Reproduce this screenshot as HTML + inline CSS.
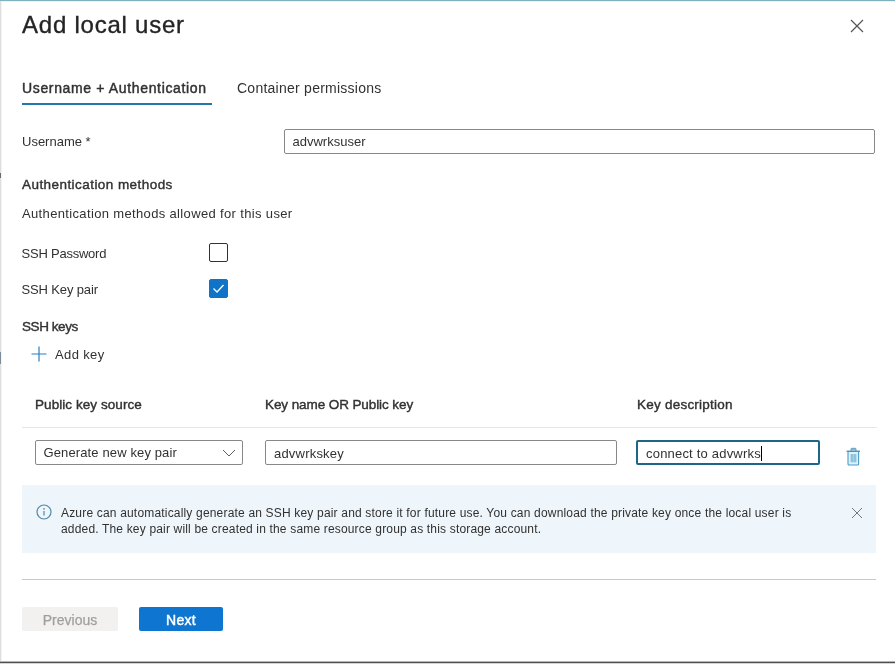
<!DOCTYPE html>
<html><head><meta charset="utf-8"><title>Add local user</title>
<style>
*{box-sizing:border-box;margin:0;padding:0}
html,body{width:895px;height:664px;overflow:hidden;background:#fff}
body{position:relative;font-family:"Liberation Sans",sans-serif;color:#323130;font-size:13px}
.a{position:absolute;white-space:nowrap;line-height:1}
.topline{left:0;top:0;width:895px;height:2px;background:linear-gradient(#7fb1be 0,#7fb1be 1px,#dcf0f4 1px,#eef8fa 2px)}
.leftline{left:0;top:1px;width:2px;height:661px;background:linear-gradient(90deg,#dedede 0,#dedede 1px,#f4f4f4 1px,#f4f4f4 2px)}
.botline{left:0;top:661px;width:895px;height:3px;background:linear-gradient(#b4b4b4 0,#b4b4b4 1px,#505050 1px,#505050 2px,#d4d4d4 2px,#d4d4d4 3px)}
.title{left:22px;top:13px;font-size:24px;letter-spacing:0.77px;color:#252423;font-weight:400;-webkit-text-stroke:0.35px #252423}
.tab1{left:22px;top:81px;letter-spacing:0.645px;font-size:14px;font-weight:400;-webkit-text-stroke:0.45px #323130;color:#323130}
.tab2{left:237px;top:81px;letter-spacing:0.25px;font-size:14px;color:#323130}
.tabline{left:22px;top:103px;width:189.500px;height:2px;background:#2476ad}
.lbl{font-size:13px;color:#323130}
.b{font-size:13.5px;font-weight:400;-webkit-text-stroke:0.4px #323130}
.inp{border:1px solid #8a8886;border-radius:2px;background:#fff;height:25px}
.inp span{position:absolute;left:8px;top:5px;font-size:13px;line-height:1;color:#323130}
.cb{left:209px;width:19px;height:19px;border:1px solid #323130;border-radius:2px;background:#fff}
.cb.on{background:#0f74c8;border-color:#0f74c8}
.hline{height:1px;background:#e6e6e6}
.info{left:22px;top:485px;width:853.500px;height:68px;background:#eef5fb}
.btn{top:607px;height:24px;border-radius:2px;font-size:14px;text-align:center;line-height:27px}
</style></head><body><div style="position:absolute;left:0;top:0;width:895px;height:664px;will-change:transform">
<div class="a topline"></div><div class="a leftline"></div><div class="a botline"></div><div class="a" style="left:0;top:173px;width:1px;height:5px;background:#6a6a6a"></div><div class="a" style="left:0;top:352px;width:1px;height:12px;background:#7d8c98"></div>

<div class="a title">Add local user</div>
<svg class="a" style="left:850px;top:19px" width="14" height="14" viewBox="0 0 14 14"><path d="M1 1L13 13M13 1L1 13" stroke="#555" stroke-width="1.2" fill="none"/></svg>

<div class="a tab1">Username + Authentication</div>
<div class="a tab2">Container permissions</div>
<div class="a tabline"></div>

<div class="a lbl" style="left:22px;top:135px">Username *</div>
<div class="a inp" style="left:283.500px;top:129px;width:591.500px"><span>advwrksuser</span></div>

<div class="a lbl b" style="left:22px;top:178px;letter-spacing:0.44px">Authentication methods</div>
<div class="a lbl" style="left:22px;top:207px;letter-spacing:0.35px">Authentication methods allowed for this user</div>

<div class="a lbl" style="left:21.500px;top:247px;letter-spacing:-0.225px">SSH Password</div>
<div class="a cb" style="top:243px"></div>
<div class="a lbl" style="left:21.500px;top:283px;letter-spacing:-0.135px">SSH Key pair</div>
<div class="a cb on" style="top:279px"><svg width="17" height="17" viewBox="0 0 17 17" style="display:block"><path d="M3.5 8.5L7 12L13.5 5" stroke="#fff" stroke-width="1.3" fill="none"/></svg></div>

<div class="a lbl b" style="left:22px;top:320px;letter-spacing:-0.43px">SSH keys</div>
<svg class="a" style="left:31px;top:346px" width="16" height="16" viewBox="0 0 16 16"><path d="M8 0.5V15.5M0.5 8H15.5" stroke="#2a7fc0" stroke-width="1.2" fill="none"/></svg>
<div class="a lbl" style="left:55px;top:348px;letter-spacing:0.37px">Add key</div>

<div class="a lbl b" style="left:35px;top:398px;letter-spacing:0.06px">Public key source</div>
<div class="a lbl b" style="left:265px;top:398px;letter-spacing:-0.09px">Key name OR Public key</div>
<div class="a lbl b" style="left:637px;top:398px;letter-spacing:0.23px">Key description</div>
<div class="a hline" style="left:22px;top:427px;width:854.500px"></div>

<div class="a inp" style="left:34.500px;top:440px;width:208.500px"><span style="letter-spacing:0.125px">Generate new key pair</span>
<svg style="position:absolute;left:186.800px;top:8.300px" width="14" height="8" viewBox="0 0 14 8"><path d="M1 1L7 7L13 1" stroke="#605e5c" stroke-width="1" fill="none"/></svg></div>
<div class="a inp" style="left:265px;top:440px;width:351.500px;height:25px"><span style="top:6px;letter-spacing:0.2px">advwrkskey</span></div>
<div class="a inp" style="left:636px;top:440px;width:184px;height:25px;border:2px solid #1e6688"><span style="left:8px;top:5px;letter-spacing:0.2px">connect to advwrks</span><i style="position:absolute;left:123px;top:3.500px;width:1px;height:15px;background:#000"></i></div>
<svg class="a" style="left:845px;top:445.500px" width="17" height="21" viewBox="0 0 17 21"><path d="M3 5.500H13.600V18Q13.600 19 12.600 19H4Q3 19 3 18Z" fill="#dff1fa" stroke="#4a9bc9" stroke-width="1.100"/><path d="M1.500 5.200H15" stroke="#4a93bf" stroke-width="1.300"/><path d="M6 5V3Q6 2.300 6.700 2.300H10.300Q11 2.300 11 3V5" fill="#8fb9cf" stroke="#5a9cc0" stroke-width="0.900"/><rect x="5.600" y="8" width="5.800" height="8.300" fill="#8cc4de"/><path d="M8.500 8V16.300" stroke="#a9d4e8" stroke-width="0.800"/></svg>

<div class="a info"></div>
<svg class="a" style="left:35.750px;top:504px" width="16" height="16" viewBox="0 0 16 16"><circle cx="8" cy="8" r="7" stroke="#4f89a6" stroke-width="1.200" fill="none"/><path d="M8 7V11.500" stroke="#4f89a6" stroke-width="1.200"/><circle cx="8" cy="4.800" r="0.850" fill="#4f89a6"/></svg>
<div class="a" style="left:61px;top:507px;font-size:12px;letter-spacing:0.18px;color:#323130">Azure can automatically generate an SSH key pair and store it for future use. You can download the private key once the local user is</div>
<div class="a" style="left:61px;top:523px;font-size:12px;letter-spacing:0.17px;color:#323130">added. The key pair will be created in the same resource group as this storage account.</div>
<svg class="a" style="left:851px;top:506.500px" width="12" height="12" viewBox="0 0 12 12"><path d="M1 1L11 11M11 1L1 11" stroke="#777" stroke-width="1" fill="none"/></svg>

<div class="a hline" style="left:22px;top:579px;width:853.500px;background:#c8c8c8"></div>

<div class="a btn" style="left:22px;width:96px;background:#f2f1f0;color:#a19f9d;-webkit-text-stroke:0.25px #a19f9d">Previous</div>
<div class="a btn" style="left:139px;width:84px;background:#0e76d0;color:#fff;letter-spacing:0.33px;-webkit-text-stroke:0.45px #fff">Next</div>
</div></body></html>
